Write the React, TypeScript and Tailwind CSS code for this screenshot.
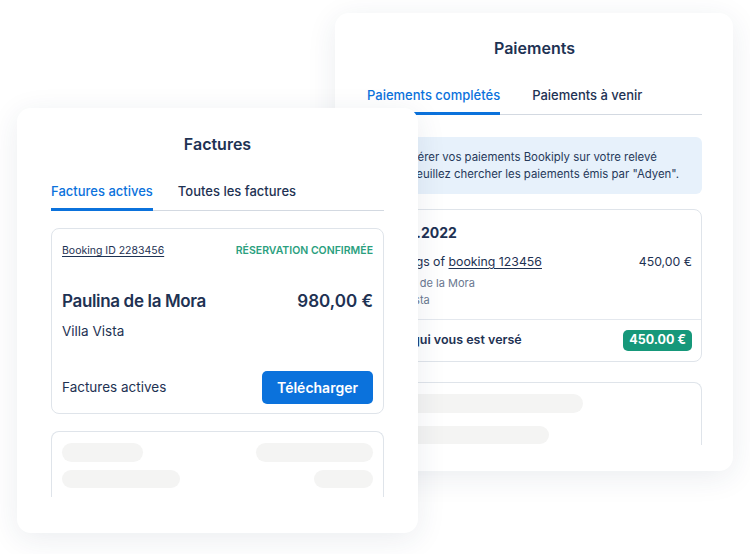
import { Info } from 'lucide-react';

const navy = 'text-[#1e3253]';

function Tabs({
  items,
  gap,
}: {
  items: string[];
  gap: string;
}): JSX.Element {
  return (
    <div className={`flex border-b border-[#d3d9e1] ${gap}`}>
      {items.map((label, i) => (
        <div
          key={label}
          className={`-mb-px border-b-[3px] pb-[7px] text-[13px] font-medium leading-5 ${
            i === 0 ? 'border-[#0b72dc] text-[#0b72dc]' : `border-transparent ${navy}`
          }`}
        >
          {label}
        </div>
      ))}
    </div>
  );
}

function Skeleton({ className }: { className: string }): JSX.Element {
  return <div className={`rounded-full bg-[#f4f4f3] ${className}`} />;
}

function Factures(): JSX.Element {
  return (
    <div className="absolute left-[17px] top-[108px] flex h-[425px] w-[401px] flex-col rounded-[14px] bg-white px-[34px] pb-[36px] pt-[26px] shadow-[0_6px_30px_rgba(30,50,90,0.09)]">
      <h2 className={`text-center text-[16px] font-semibold leading-5 ${navy}`}>Factures</h2>

      <div className="mt-[27px]">
        <Tabs items={['Factures actives', 'Toutes les factures']} gap="gap-[25px]" />
      </div>

      <div className="mt-[17px] flex min-h-0 flex-1 flex-col gap-[17px] overflow-hidden">
        <div className="rounded-[8px] border-[1.5px] border-[#dfe4ea] px-[10px] pb-[9px] pt-[14px]">
          <div className="flex items-center justify-between text-[10.5px] leading-4">
            <span className={`underline underline-offset-2 ${navy}`}>Booking ID 2283456</span>
            <span className="font-semibold text-[#2b9f7e]">RÉSERVATION CONFIRMÉE</span>
          </div>

          <div className={`mt-[30px] flex items-center justify-between text-[17px] font-semibold leading-6 ${navy}`}>
            <span className="tracking-[-0.02em]">Paulina de la Mora</span>
            <span>980,00 €</span>
          </div>
          <div className={`mt-2 text-[13.5px] leading-5 ${navy}`}>Villa Vista</div>

          <div className="mt-[30px] flex items-center justify-between">
            <span className={`text-[13.5px] ${navy}`}>Factures actives</span>
            <button className="h-[33px] rounded-[5px] bg-[#0b72dc] px-[15px] text-[14px] font-semibold text-white">
              Télécharger
            </button>
          </div>
        </div>

        <div className="shrink-0 rounded-t-[8px] border-[1.5px] border-b-0 border-[#dfe4ea] px-[10px] pt-[11px]">
          <div className="flex justify-between">
            <Skeleton className="h-[19px] w-[81px]" />
            <Skeleton className="h-[19px] w-[117px]" />
          </div>
          <div className="mt-2 flex justify-between pb-6">
            <Skeleton className="h-[18px] w-[118px]" />
            <Skeleton className="h-[18px] w-[59px]" />
          </div>
        </div>
      </div>
    </div>
  );
}

function Paiements(): JSX.Element {
  return (
    <div className="absolute left-[335px] top-[13px] flex h-[458px] w-[398px] flex-col rounded-[14px] bg-white pb-[26px] pl-[32px] pr-[31px] pt-[25px] shadow-[0_6px_30px_rgba(30,50,90,0.09)]">
      <h2 className={`text-center text-[16px] font-semibold leading-5 ${navy}`}>Paiements</h2>

      <div className="mt-[27px]">
        <Tabs items={['Paiements complétés', 'Paiements à venir']} gap="gap-[32px]" />
      </div>

      <div className="mt-[22px] flex h-[57px] items-center gap-3 rounded-[6px] bg-[#e7f1fb] pl-3">
        <Info className="h-[18px] w-[18px] shrink-0 text-[#0b72dc]" />
        <p className="whitespace-nowrap text-[11.4px] leading-[17px] text-[#26395a]">
          Gérer vos paiements Bookiply sur votre relevé
          <br />
          Veuillez chercher les paiements émis par "Adyen".
        </p>
      </div>

      <div className="mt-[15px] flex min-h-0 flex-1 flex-col gap-5 overflow-hidden">
        <div className="shrink-0 rounded-[8px] border-[1.5px] border-[#dfe4ea]">
          <div className="pb-[11px] pl-[11px] pr-[9px] pt-[13px]">
            <div className={`text-[14px] font-bold leading-5 ${navy}`}>12.03.2022</div>
            <div className={`mt-[10px] flex justify-between text-[12.3px] leading-[18px] ${navy}`}>
              <span>
                Earnings of <span className="underline underline-offset-2">booking 123456</span>
              </span>
              <span>450,00 €</span>
            </div>
            <div className="mt-1 text-[11px] leading-4 text-[#6a7890]">Paulina de la Mora</div>
            <div className="mt-px text-[11px] leading-4 text-[#6a7890]">Villa Vista</div>
          </div>
          <div className="flex h-[42px] items-center justify-between border-t-[1.5px] border-[#e4e8ee] pl-[11px] pr-[9px]">
            <span className={`text-[12.5px] font-semibold ${navy}`}>Total qui vous est versé</span>
            <span className="flex h-[21px] items-center rounded-[5px] bg-[#16987a] px-[6px] text-[12.5px] font-bold text-white">
              450.00 €
            </span>
          </div>
        </div>

        <div className="shrink-0 rounded-t-[8px] border-[1.5px] border-b-0 border-[#dfe4ea] px-[11px] pt-[11px]">
          <Skeleton className="h-[19px] w-[204px]" />
          <Skeleton className="mt-[13px] h-[18px] w-[170px]" />
          <div className="h-6" />
        </div>
      </div>
    </div>
  );
}

export default function App(): JSX.Element {
  return (
    <div className="relative h-[554px] w-[750px] overflow-hidden bg-white font-['Inter','Noto_Sans',sans-serif]">
      <Paiements />
      <Factures />
    </div>
  );
}
